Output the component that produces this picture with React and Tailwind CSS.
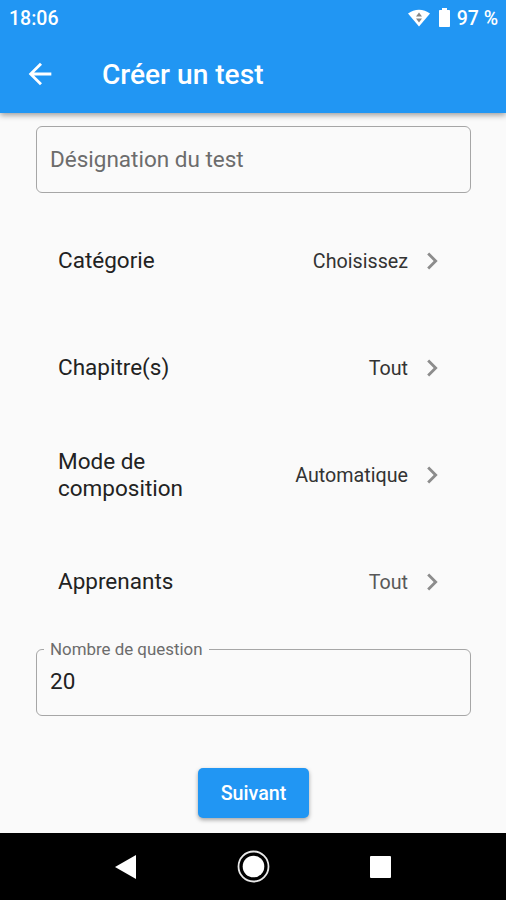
const options = [
  { label: 'Catégorie', value: 'Choisissez', tone: 'text-[#333333]' },
  { label: 'Chapitre(s)', value: 'Tout', tone: 'text-[#333333]' },
  { label: 'Mode de composition', value: 'Automatique', tone: 'text-[#333333]' },
  { label: 'Apprenants', value: 'Tout', tone: 'text-[#585858]' },
]

function StatusBar() {
  return (
    <div className="flex h-[37px] items-center justify-between pl-[9px] pr-2 text-[19.5px] font-medium">
      <span>18:06</span>
      <div className="flex items-center">
        <svg className="-mt-px h-[18px] w-[22px]" viewBox="0 0 22 18">
          <path d="M0 4.6C6.2-.6 15.8-.6 22 4.6L11 17.6Z" fill="#fff" />
          <path d="M11 3.4 14 7.4H8ZM11 13.4 8 9.4h6Z" fill="#858585" />
        </svg>
        <svg className="-mt-0.5 ml-[9px] h-[19px] w-[11px]" viewBox="0 0 11 19">
          <path d="M3 0h5v2h2c.6 0 1 .4 1 1v15c0 .6-.4 1-1 1H1c-.6 0-1-.4-1-1V3c0-.6.4-1 1-1h2Z" fill="#fff" />
        </svg>
        <span className="ml-[7px] whitespace-nowrap">97 %</span>
      </div>
    </div>
  )
}

function OptionRow({ label, value, tone }) {
  return (
    <button className="flex h-[107px] w-full items-center pl-[22px] pr-[22px] text-left">
      <span className="w-[150px] text-[22.5px] leading-[27px] text-[#222222]">{label}</span>
      <span className={`ml-auto pt-[2px] text-[19.7px] ${tone}`}>{value}</span>
      <svg className="ml-[7px] h-[34px] w-[34px]" viewBox="0 0 24 24" fill="#8c8c8c">
        <path d="M10 6 8.59 7.41 13.17 12l-4.58 4.59L10 18l6-6z" />
      </svg>
    </button>
  )
}

export default function App() {
  return (
    <div className="flex h-[900px] w-[506px] flex-col overflow-hidden bg-[#fafafa] font-['Roboto',sans-serif]">
      {/* App bar */}
      <header className="relative h-[113px] shrink-0 bg-[#2196f3] text-white shadow-[0_2px_6px_rgba(0,0,0,0.4)]">
        <StatusBar />
        <div className="flex h-[74px] items-center pl-[23px]">
          <button aria-label="Retour">
            <svg className="h-[34px] w-[34px]" viewBox="0 0 24 24" fill="currentColor">
              <path d="M20 11H7.83l5.59-5.59L12 4l-8 8 8 8 1.41-1.41L7.83 13H20v-2z" />
            </svg>
          </button>
          <h1 className="ml-[45px] mt-[2px] text-[28.1px] leading-8 font-medium">Créer un test</h1>
        </div>
      </header>

      {/* Form */}
      <main className="flex-1 pl-[36px] pr-[35px] pt-[13px]">
        <div className="flex h-[67px] items-center rounded-md border border-[#a6a6a6] px-[13px] text-[22.5px] text-[#6c6c6c]">
          Désignation du test
        </div>

        <div className="mt-[14px]">
          {options.map((option) => (
            <OptionRow key={option.label} {...option} />
          ))}
        </div>

        <fieldset className="mt-[4px] h-[77px] rounded-md border border-[#a6a6a6] px-[7px]">
          <legend className="px-[6px] text-[16.9px] leading-5 text-[#6c6c6c]">Nombre de question</legend>
          <p className="px-[6px] text-[22.5px] leading-[44px] text-[#222222]">20</p>
        </fieldset>

        <div className="mt-[52px] flex justify-center">
          <button className="h-[50px] w-[111px] rounded-[5px] bg-[#2196f3] pt-px text-[19.7px] font-medium text-white shadow-[0_2px_4px_rgba(0,0,0,0.35)]">
            Suivant
          </button>
        </div>
      </main>

      {/* System navigation */}
      <nav className="grid h-[67px] shrink-0 grid-cols-[126px_255px_125px] items-center bg-black">
        <svg className="ml-auto mr-[-10px] h-6 w-[21px]" viewBox="0 0 21 24" fill="#fff">
          <path d="M0 12 21 0v24Z" />
        </svg>
        <svg className="mx-auto h-[33px] w-[33px]" viewBox="0 0 33 33">
          <circle cx="16.5" cy="16.5" r="15" fill="none" stroke="#e8e8e8" strokeWidth="1.8" />
          <circle cx="16.5" cy="16.5" r="10.8" fill="#fff" />
        </svg>
        <span className="-ml-[11px] h-[22px] w-[21px] rounded-[1px] bg-white" />
      </nav>
    </div>
  )
}
